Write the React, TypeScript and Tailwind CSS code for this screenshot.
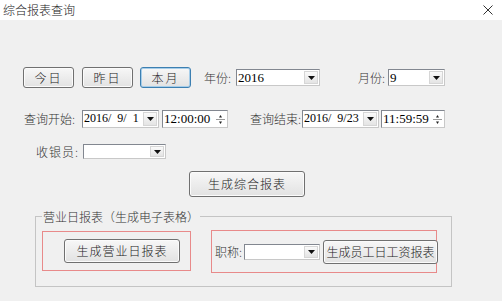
import React from "react";

const cjk = "font-['Noto_Sans_CJK_SC',sans-serif] font-light";
const num = "font-['Liberation_Serif','Noto_Sans_CJK_SC',serif]";

function Btn({
  children,
  className = "",
  active = false,
}: {
  children: React.ReactNode;
  className?: string;
  active?: boolean;
}) {
  return (
    <button
      type="button"
      className={`flex items-center justify-center whitespace-nowrap rounded-[3px] border bg-gradient-to-b from-[#f7f7f7] to-[#e2e2e2] text-[12px] text-[#222] ${cjk} ${
        active
          ? "border-[#3c7fb1] shadow-[inset_0_0_0_1px_#a6cde9]"
          : "border-[#707070] shadow-[inset_0_0_0_1px_#fbfbfb]"
      } ${className}`}
    >
      {children}
    </button>
  );
}

function Arrow() {
  return (
    <svg width="7" height="4" viewBox="0 0 7 4" aria-hidden="true">
      <path d="M0 0h7L3.5 4z" fill="#111" />
    </svg>
  );
}

function Select({
  value = "",
  className = "",
  textSize = "text-[13px]",
}: {
  value?: string;
  className?: string;
  textSize?: string;
}) {
  return (
    <div
      className={`flex items-stretch border border-[#828790] border-r-[#c8c8c8] border-b-[#c8c8c8] bg-white ${className}`}
    >
      <div className={`flex-1 overflow-hidden whitespace-pre pl-[1px] leading-[15px] text-black ${textSize} ${num}`}>
        {value}
      </div>
      <div className="my-[1px] mr-[1px] flex w-[14px] shrink-0 items-center justify-center border border-[#d6d6d6] bg-gradient-to-b from-[#fafafa] to-[#e4e4e4]">
        <Arrow />
      </div>
    </div>
  );
}

function Spin({ value, className = "" }: { value: string; className?: string }) {
  return (
    <div
      className={`flex items-stretch border border-[#828790] border-r-[#c8c8c8] border-b-[#c8c8c8] bg-white ${className}`}
    >
      <div className={`flex-1 whitespace-nowrap pl-[1px] text-[13px] leading-[15px] text-black ${num}`}>
        {value}
      </div>
      <div className="flex w-[13px] flex-col items-center justify-center">
        <svg width="9" height="13" viewBox="0 0 9 13" aria-hidden="true">
          <path d="M4.5 2L6 4.5H3z" fill="#222" />
          <path d="M0 6.5h9" stroke="#9a9a9a" strokeWidth="1" />
          <path d="M4.5 11L6 8.5H3z" fill="#222" />
        </svg>
      </div>
    </div>
  );
}

function Label({ children, className = "" }: { children: React.ReactNode; className?: string }) {
  return (
    <span className={`whitespace-nowrap text-[12px] leading-[14px] text-[#333] ${cjk} ${className}`}>
      {children}
    </span>
  );
}

export default function App() {
  return (
    <main className="flex h-[301px] w-[502px] flex-col overflow-hidden bg-[#f0f0f0]">
      {/* 标题栏 */}
      <header className="flex h-[20px] shrink-0 items-center justify-between bg-white pl-[3px] pr-[9px]">
        <span className={`text-[12px] text-[#222] ${cjk}`}>综合报表查询</span>
        <svg width="10" height="10" viewBox="0 0 10 10" aria-hidden="true">
          <path d="M0.5 0.5l9 9M9.5 0.5l-9 9" stroke="#333" strokeWidth="1" />
        </svg>
      </header>

      <section className="flex flex-col">
        {/* 日期按钮 + 年月 */}
        <div className="mt-[47px] flex items-center pl-[23px]">
          <Btn className="h-[21px] w-[51px] tracking-[2px]">今日</Btn>
          <Btn className="ml-[8px] h-[21px] w-[51px] tracking-[2px]">昨日</Btn>
          <Btn active className="ml-[7px] h-[21px] w-[51px] tracking-[2px]">本月</Btn>
          <Label className="ml-[13px]">年份:</Label>
          <Select value="2016" className="ml-[5px] h-[17px] w-[84px]" />
          <Label className="ml-[38px]">月份:</Label>
          <Select value="9" className="ml-[3px] h-[17px] w-[57px]" />
        </div>

        {/* 查询时间 */}
        <div className="mt-[22px] flex items-center pl-[24px]">
          <Label>查询开始:</Label>
          <Select value="2016/  9/  1" textSize="text-[12px]" className="ml-[7px] h-[18px] w-[77px]" />
          <Spin value="12:00:00" className="ml-[3px] h-[18px] w-[66px]" />
          <Label className="ml-[22px]">查询结束:</Label>
          <Select value="2016/  9/23" textSize="text-[12px]" className="ml-[1px] h-[18px] w-[77px]" />
          <Spin value="11:59:59" className="ml-[2px] h-[18px] w-[64px]" />
        </div>

        {/* 收银员 */}
        <div className="mt-[16px] flex items-center pl-[36px]">
          <Label className="tracking-[1px]">收银员:</Label>
          <Select className="ml-[4px] h-[15px] w-[83px]" />
        </div>

        <div className="mt-[12px] flex pl-[189px]">
          <Btn className="h-[26px] w-[116px] tracking-[1px]">生成综合报表</Btn>
        </div>

        {/* 营业日报表 */}
        <fieldset className="ml-[35px] mt-[7px] h-[83px] w-[417px] border border-[#c4c4c4] px-[6px] pt-0">
          <legend className="px-[1px]">
            <Label className="text-[#222]">营业日报表（生成电子表格）</Label>
          </legend>
          <div className="mt-[3px] flex items-start">
            <div className="flex h-[40px] w-[149px] items-center border border-[#e88a8a] pl-[21px]">
              <Btn className="h-[24px] w-[116px] tracking-[1px]">生成营业日报表</Btn>
            </div>
            <div className="ml-[20px] -mt-[1px] flex h-[43px] w-[226px] items-center border border-[#e88a8a] pl-[3px]">
              <Label>职称:</Label>
              <Select className="ml-[2px] h-[16px] w-[84px]" />
              <Btn className="-mr-[2px] ml-[3px] h-[24px] w-[115px] shrink-0 text-[11px]">生成员工日工资报表</Btn>
            </div>
          </div>
        </fieldset>
      </section>
    </main>
  );
}
